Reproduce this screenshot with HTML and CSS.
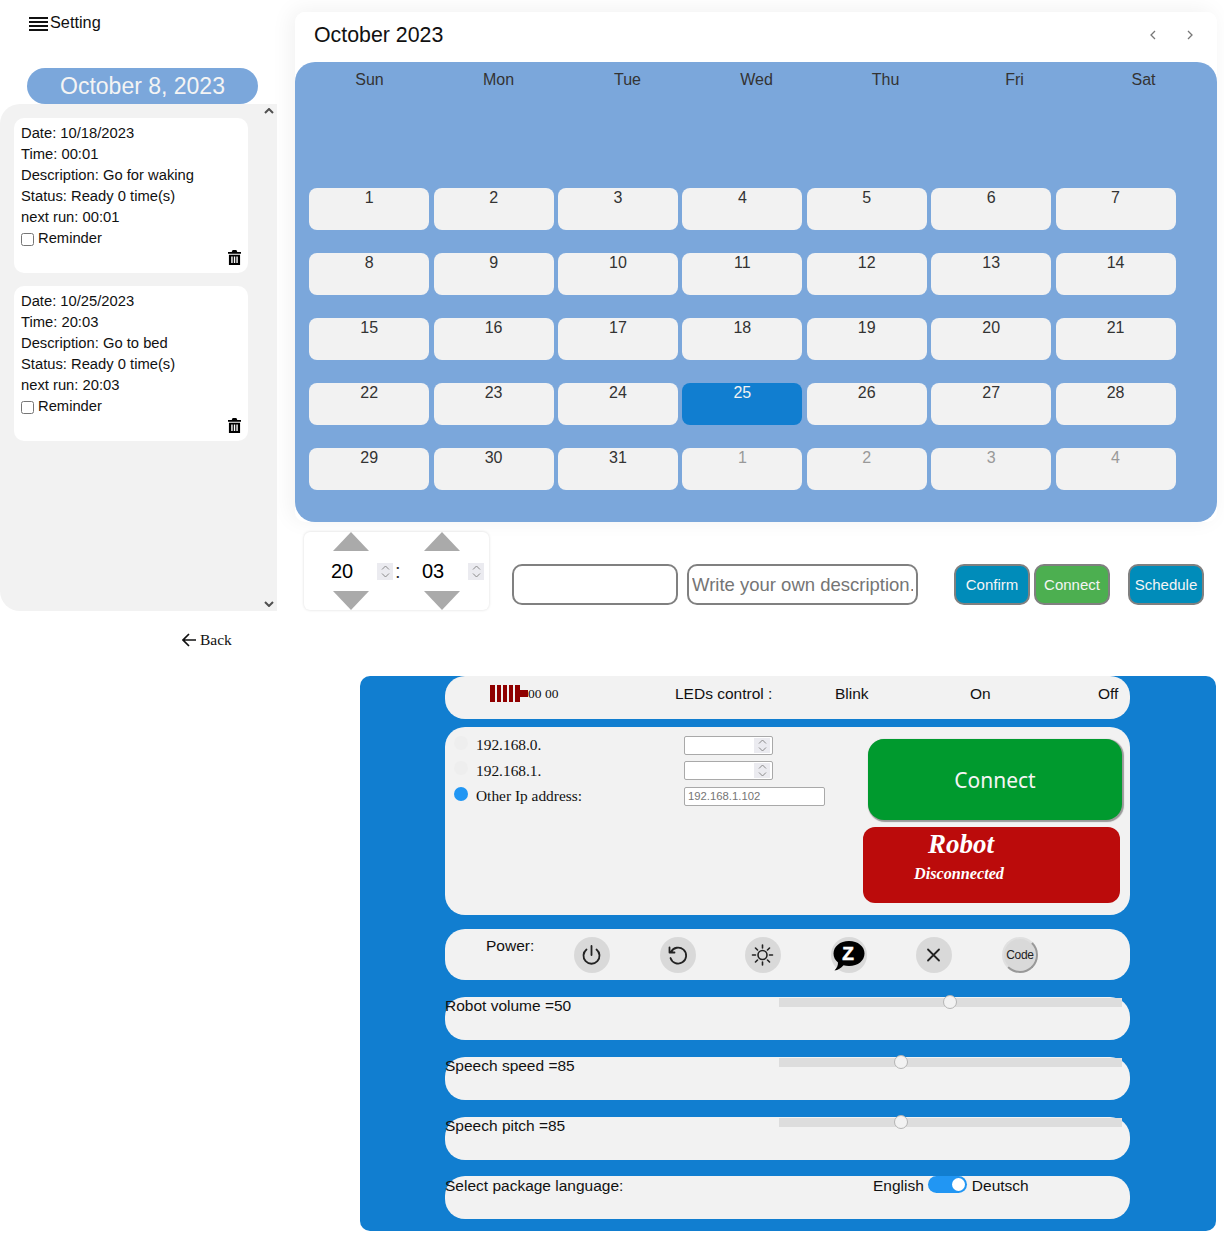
FILE: index.html
```html
<!DOCTYPE html>
<html lang="en">
<head>
<meta charset="utf-8">
<title>Robot schedule</title>
<link rel="stylesheet" href="styles.css">
</head>
<body>
<div class="top">
  <aside class="aside">
    <div class="setting">
      <svg class="burger" viewBox="0 0 19 14" width="19" height="14"><path d="M0 1h19M0 5h19M0 9h19M0 13h19" stroke="#111" stroke-width="1.8"/></svg>
      <span>Setting</span>
    </div>
    <div class="pill">October 8, 2023</div>
    <div class="list">
      <svg class="scroll-arrow up" viewBox="0 0 10 6" width="10" height="6"><path d="M1 5l4-4 4 4" fill="none" stroke="#505050" stroke-width="2"/></svg>
      <svg class="scroll-arrow down" viewBox="0 0 10 6" width="10" height="6"><path d="M1 1l4 4 4-4" fill="none" stroke="#505050" stroke-width="2"/></svg>
      <article class="card">
        <div>Date: 10/18/2023</div>
        <div>Time: 00:01</div>
        <div>Description: Go for waking</div>
        <div>Status: Ready 0 time(s)</div>
        <div>next run: 00:01</div>
        <label class="reminder"><input type="checkbox"> Reminder</label>
        <svg class="trash" viewBox="0 0 14 16" width="13" height="15"><path d="M5 0h4l1 2h4v2H0V2h4zM1 5h12v11H1zM3.500 7v7h1.500V7zM6.300 7v7h1.500V7zM9 7v7h1.500V7z" fill-rule="evenodd" fill="#000"/></svg>
      </article>
      <article class="card">
        <div>Date: 10/25/2023</div>
        <div>Time: 20:03</div>
        <div>Description: Go to bed</div>
        <div>Status: Ready 0 time(s)</div>
        <div>next run: 20:03</div>
        <label class="reminder"><input type="checkbox"> Reminder</label>
        <svg class="trash" viewBox="0 0 14 16" width="13" height="15"><path d="M5 0h4l1 2h4v2H0V2h4zM1 5h12v11H1zM3.500 7v7h1.500V7zM6.300 7v7h1.500V7zM9 7v7h1.500V7z" fill-rule="evenodd" fill="#000"/></svg>
      </article>
    </div>
    <div class="back">
      <svg viewBox="0 0 14 14" width="14" height="14"><path d="M7 1L1 7l6 6M1 7h13" fill="none" stroke="#111" stroke-width="1.700"/></svg>
      <span>Back</span>
    </div>
  </aside>
  <main class="main">
    <section class="calendar">
      <header class="cal-head">
        <h1>October 2023</h1>
        <div class="cal-nav">
          <svg viewBox="0 0 6 10" width="6" height="10"><path d="M5 1L1 5l4 4" fill="none" stroke="#777" stroke-width="1.300"/></svg>
          <svg viewBox="0 0 6 10" width="6" height="10"><path d="M1 1l4 4-4 4" fill="none" stroke="#777" stroke-width="1.300"/></svg>
        </div>
      </header>
      <div class="cal-body">
        <div class="weekdays"><span>Sun</span><span>Mon</span><span>Tue</span><span>Wed</span><span>Thu</span><span>Fri</span><span>Sat</span></div>
        <div class="days">
          <div class="day">1</div><div class="day">2</div><div class="day">3</div><div class="day">4</div><div class="day">5</div><div class="day">6</div><div class="day">7</div>
          <div class="day">8</div><div class="day">9</div><div class="day">10</div><div class="day">11</div><div class="day">12</div><div class="day">13</div><div class="day">14</div>
          <div class="day">15</div><div class="day">16</div><div class="day">17</div><div class="day">18</div><div class="day">19</div><div class="day">20</div><div class="day">21</div>
          <div class="day">22</div><div class="day">23</div><div class="day">24</div><div class="day selected">25</div><div class="day">26</div><div class="day">27</div><div class="day">28</div>
          <div class="day">29</div><div class="day">30</div><div class="day">31</div><div class="day muted">1</div><div class="day muted">2</div><div class="day muted">3</div><div class="day muted">4</div>
        </div>
      </div>
    </section>
    <div class="controls">
      <div class="picker">
        <div class="unit">
          <span class="tri up"></span>
          <div class="num-row">
            <input class="num" type="text" value="20">
            <span class="spin"><svg viewBox="0 0 9 13" width="9" height="13"><path d="M1 4.500L4.500 1 8 4.500M1 8.500L4.500 12 8 8.500" fill="none" stroke="#8a8a8a" stroke-width="1"/></svg></span>
          </div>
          <span class="tri down"></span>
        </div>
        <span class="colon">:</span>
        <div class="unit">
          <span class="tri up"></span>
          <div class="num-row">
            <input class="num" type="text" value="03">
            <span class="spin"><svg viewBox="0 0 9 13" width="9" height="13"><path d="M1 4.500L4.500 1 8 4.500M1 8.500L4.500 12 8 8.500" fill="none" stroke="#8a8a8a" stroke-width="1"/></svg></span>
          </div>
          <span class="tri down"></span>
        </div>
      </div>
      <input class="field short" type="text">
      <input class="field desc" type="text" placeholder="Write your own description.">
      <button class="btn blue first">Confirm</button>
      <button class="btn green">Connect</button>
      <button class="btn blue last">Schedule</button>
    </div>
  </main>
</div>

<section class="robot">
  <div class="row row-led">
    <div class="battery">
      <svg viewBox="0 0 38 17" width="38" height="17"><path d="M0 0h5v17H0zM7 0h4v17H7zM13 0h4v17h-4zM19 0h4v17h-4zM25 0h5v17h-5zM30 5h8v7h-8z" fill="#8f0000"/></svg>
      <span>00 00</span>
    </div>
    <span class="led-title">LEDs control :</span>
    <span class="led-blink">Blink</span>
    <span class="led-on">On</span>
    <span class="led-off">Off</span>
  </div>
  <div class="row row-net">
    <div class="ips">
      <div class="ip"><span class="radio"></span><span class="ip-label">192.168.0.</span>
        <div class="octet"><input type="text"><span class="spin small"><svg viewBox="0 0 9 13" width="9" height="13"><path d="M1 4.500L4.500 1 8 4.500M1 8.500L4.500 12 8 8.500" fill="none" stroke="#8a8a8a" stroke-width="1"/></svg></span></div>
      </div>
      <div class="ip"><span class="radio"></span><span class="ip-label">192.168.1.</span>
        <div class="octet"><input type="text"><span class="spin small"><svg viewBox="0 0 9 13" width="9" height="13"><path d="M1 4.500L4.500 1 8 4.500M1 8.500L4.500 12 8 8.500" fill="none" stroke="#8a8a8a" stroke-width="1"/></svg></span></div>
      </div>
      <div class="ip"><span class="radio on"></span><span class="ip-label">Other Ip address:</span><input class="other" type="text" placeholder="192.168.1.102"></div>
    </div>
    <div class="status">
      <button class="big-connect">Connect</button>
      <div class="robot-state">
        <div class="state-title">Robot</div>
        <div class="state-sub">Disconnected</div>
      </div>
    </div>
  </div>
  <div class="row row-power">
    <span class="power-label">Power:</span>
    <div class="power-icons">
      <span class="round"><svg viewBox="0 0 24 24" width="24" height="24"><path d="M11.500 3v9M6.500 6.500a8 8 0 1 0 10 0" fill="none" stroke="#222" stroke-width="1.800" stroke-linecap="round"/></svg></span>
      <span class="round"><svg viewBox="0 0 24 24" width="24" height="24"><path d="M5 9a8 8 0 1 1-.5 6M3.500 4.500v5h5" fill="none" stroke="#222" stroke-width="1.800" stroke-linecap="round" stroke-linejoin="round"/></svg></span>
      <span class="round"><svg viewBox="0 0 24 24" width="24" height="24"><circle cx="11.500" cy="12" r="4.500" fill="none" stroke="#222" stroke-width="1.600"/><path d="M11.500 2v3M11.500 19v3M1.500 12h3M18.500 12h3M4.500 5l2 2M16.500 17l2 2M4.500 19l2-2M16.500 7l2-2" stroke="#222" stroke-width="1.600" stroke-linecap="round"/></svg></span>
      <span class="round"><svg viewBox="0 0 34 34" width="34" height="34"><path d="M17 3c9 0 15.500 5.500 15.500 12.500S26 28 17 28c-2 0-3.800-.3-5.500-.8C9 30 6 32 2.500 32.500 5 30 6 27.500 6 24.500 3 22 1.500 19 1.500 15.500 1.500 8.500 8 3 17 3z" fill="#000"/><text x="16" y="22" class="zed">Z</text></svg></span>
      <span class="round"><svg viewBox="0 0 24 24" width="24" height="24"><path d="M6 6.500l11 11M17 6.500l-11 11" stroke="#222" stroke-width="1.800" stroke-linecap="round"/></svg></span>
      <span class="round code">Code</span>
    </div>
  </div>
  <div class="row row-slide">
    <span>Robot volume =50</span>
    <div class="track"><span class="thumb" style="left:49.850%"></span></div>
  </div>
  <div class="row row-slide">
    <span>Speech speed =85</span>
    <div class="track"><span class="thumb" style="left:35.700%"></span></div>
  </div>
  <div class="row row-slide">
    <span>Speech pitch =85</span>
    <div class="track"><span class="thumb" style="left:35.700%"></span></div>
  </div>
  <div class="row row-lang">
    <span class="lang-title">Select package language:</span>
    <span>English</span>
    <span class="toggle"><span class="knob"></span></span>
    <span>Deutsch</span>
  </div>
</section>
</body>
</html>
```
FILE: styles.css
```css
* { box-sizing: border-box; }
html, body { margin: 0; padding: 0; }
body {
  width: 1224px;
  height: 1235px;
  overflow: hidden;
  background: #fff;
  font-family: "Liberation Sans", Arial, sans-serif;
  font-size: 15.500px;
  color: #111;
}

.top { display: flex; gap: 18px; }

/* left column */
.aside { width: 277px; flex: none; }
.setting {
  display: flex;
  align-items: center;
  gap: 2px;
  height: 68px;
  padding: 0 0 24px 29px;
  font-size: 16.300px;
}
.burger { flex: none; margin-top: 4px; }
.pill {
  width: 231px;
  height: 36px;
  margin-left: 27px;
  border-radius: 18px;
  background: #7ba7db;
  color: #f4f4f4;
  font-size: 23px;
  line-height: 37px;
  text-align: center;
}
.list {
  position: relative;
  height: 507px;
  padding: 14px 0 0 14px;
  background: #f2f2f2;
  border-radius: 20px 0 0 20px;
}
.scroll-arrow { position: absolute; left: 264px; }
.scroll-arrow.up { top: 4px; }
.scroll-arrow.down { bottom: 4px; }
.card {
  position: relative;
  width: 234px;
  height: 155px;
  margin-bottom: 13px;
  padding: 5px 7px;
  background: #fff;
  border-radius: 10px;
  font-size: 14.750px;
  line-height: 21px;
}
.reminder { display: flex; align-items: center; gap: 4px; }
.reminder input { width: 13px; height: 13px; margin: 1px 0 0 0; }
.trash { position: absolute; right: 7px; bottom: 8px; }
.back {
  display: flex;
  align-items: center;
  gap: 4px;
  height: 49px;
  padding: 9px 0 0 182px;
  font-family: "Liberation Serif", serif;
  font-size: 15.500px;
}

/* calendar */
.main { width: 922px; flex: none; padding-top: 12px; }
.calendar { border-radius: 10px; box-shadow: -4px -2px 22px rgba(0, 0, 0, .06); }
.cal-head {
  display: flex;
  align-items: center;
  justify-content: space-between;
  height: 50px;
  padding: 0 24px 4px 19px;
  background: #fff;
  border-radius: 10px 10px 0 0;
}
.cal-head h1 { margin: 0; font-size: 21.350px; font-weight: 400; color: #111; }
.cal-nav { display: flex; gap: 31px; }
.cal-body {
  height: 460px;
  padding: 8px 9px 0 9px;
  background: #7ba7db;
  border-radius: 20px;
  color: #333;
  font-size: 16px;
}
.weekdays {
  display: grid;
  grid-template-columns: repeat(7, 129px);
  height: 118px;
  margin-left: 1px;
  text-align: center;
  line-height: 20px;
}
.days {
  display: grid;
  grid-template-columns: repeat(7, 120px);
  grid-auto-rows: 42px;
  gap: 23px 4.400px;
  margin-left: 5.200px;
}
.day {
  background: #f2f2f2;
  border-radius: 8px;
  text-align: center;
  line-height: 20px;
}
.day.selected { background: #117ed0; color: #f2f2f2; }
.day.muted { color: #999; }

/* controls */
.controls { display: flex; align-items: flex-start; padding: 10px 0 0 9px; }
.picker {
  display: flex;
  width: 185px;
  height: 78px;
  margin-right: 23px;
  padding-left: 1px;
  background: #fff;
  border-radius: 6px;
  box-shadow: 0 0 3px rgba(0, 0, 0, .15);
}
.unit { display: flex; flex-direction: column; align-items: center; width: 91px; }
.tri { width: 0; height: 0; border-left: 18px solid transparent; border-right: 18px solid transparent; }
.tri.up { border-bottom: 19px solid #aaa; }
.tri.down { border-top: 19px solid #aaa; }
.num-row { display: flex; align-items: center; height: 40px; width: 100%; padding-left: 26px; }
.num {
  width: 46px;
  height: 22px;
  padding: 0;
  border: 0;
  outline: 0;
  background: transparent;
  font-family: inherit;
  font-size: 20px;
  color: #000;
}
.spin {
  display: flex;
  align-items: center;
  justify-content: center;
  flex: none;
  width: 16px;
  height: 17px;
  background: #ebebf0;
}
.spin.small { height: 15px; }
.colon { width: 0; margin: 0 1px 0 -1px; padding-top: 28px; font-size: 20px; color: #333; }

.field {
  height: 41px;
  margin-top: 32px;
  border: 2px solid #808080;
  border-radius: 10px;
  background: #fff;
  font-family: inherit;
  font-size: 18.500px;
}
.field.short { width: 166px; margin-right: 9px; }
.field.desc { width: 231px; padding: 0 3px; }
.field.desc::placeholder { color: #757575; }
.btn {
  width: 76px;
  height: 41px;
  margin-top: 32px;
  padding: 0;
  border: 2px solid #808080;
  border-radius: 10px;
  color: #f5f5f5;
  font-family: inherit;
  font-size: 15px;
}
.btn.blue { background: #008cba; }
.btn.green { background: #4caf50; }
.btn.first { margin-left: 36px; margin-right: 4px; }
.btn.last { margin-left: 18px; }

/* robot panel */
.robot {
  width: 856px;
  height: 555px;
  margin: 16px 0 0 360px;
  padding: 0 86px 0 85px;
  background: #117ed0;
  border-radius: 10px;
}
.row {
  background: #f2f2f2;
  border-radius: 20px;
}
.row-led {
  display: flex;
  height: 43px;
  align-items: flex-start;
  padding-top: 9px;
}
.row-led > span { flex: none; }
.battery {
  display: flex;
  align-items: center;
  flex: none;
  width: 185px;
  height: 17px;
  margin-left: 45px;
  font-family: "Liberation Serif", serif;
  font-size: 13.500px;
}
.battery svg { flex: none; }
.led-title { width: 160px; }
.led-blink { width: 135px; }
.led-on { width: 128px; }
.row-net { display: flex; height: 188px; margin-top: 8px; }
.ips { width: 418px; padding: 5px 0 0 9px; }
.ip { display: flex; align-items: center; height: 25.500px; font-family: "Liberation Serif", serif; font-size: 15.400px; }
.radio { width: 14px; height: 14px; margin-top: -4px; border-radius: 50%; background: #eee; flex: none; }
.radio.on { background: #2196f3; }
.ip-label { width: 208px; margin: 1px 0 0 8px; flex: none; }
.octet {
  display: flex;
  align-items: center;
  width: 89px;
  height: 19px;
  margin-top: 1px;
  padding-right: 2px;
  border: 1px solid #a9a9a9;
  border-radius: 2px;
  background: #fff;
}
.octet input { flex: 1; width: 0; height: 100%; padding: 0; border: 0; background: transparent; }
.other {
  width: 141px;
  height: 19px;
  margin-top: 1px;
  padding: 0 3px;
  border: 1px solid #a9a9a9;
  border-radius: 2px;
  background: #fff;
  font-family: "Liberation Sans", sans-serif;
  font-size: 11.300px;
}
.other::placeholder { color: #757575; }
.status { display: flex; flex-direction: column; padding-top: 12px; }
.big-connect {
  width: 254px;
  height: 81px;
  margin: 0 0 1px 5px;
  padding: 0;
  border: 0;
  border-radius: 16px;
  background: #009a2e;
  box-shadow: 1px 1px 1px 1px #999;
  color: #f5f5f5;
  font-family: "Noto Sans", sans-serif;
  font-size: 21px;
}
.robot-state {
  width: 257px;
  height: 76px;
  margin-top: 6px;
  padding-top: 2px;
  background: #bb0b0b;
  border-radius: 12px;
  color: #fff;
  font-family: "Liberation Serif", serif;
  font-style: italic;
  font-weight: 700;
}
.state-title { margin-left: 65px; font-size: 27px; line-height: 31px; }
.state-sub { margin: 6px 0 0 51px; font-size: 16.200px; line-height: 17px; }
.row-power { display: flex; height: 51px; margin-top: 14px; }
.power-label { width: 129px; padding: 8px 0 0 41px; flex: none; }
.power-icons { display: flex; gap: 49.600px; padding-top: 8px; }
.round {
  display: flex;
  align-items: center;
  justify-content: center;
  width: 36px;
  height: 36px;
  border-radius: 50%;
  background: #d9d9d9;
  flex: none;
}
.zed { fill: #fff; stroke: #fff; stroke-width: .6; font-family: "Liberation Sans", sans-serif; font-size: 19px; font-weight: 700; text-anchor: middle; }
.code { border: 2px solid; border-color: #e0e0e0 #999 #999 #e0e0e0; font-size: 12px; color: #222; letter-spacing: -.300px; }
.row-slide { display: flex; height: 43px; margin-top: 17px; padding-top: 1px; line-height: 18px; }
.row-slide > span { width: 334px; margin-top: -1px; flex: none; }
.track { position: relative; width: 343px; height: 9px; background: #ddd; }
.thumb {
  position: absolute;
  top: -3px;
  width: 14px;
  height: 14px;
  margin-left: -7px;
  border: 1.500px solid #b5b5b5;
  border-radius: 50%;
  background: #f2f2f2;
}
.row-lang {
  display: flex;
  align-items: flex-start;
  height: 43px;
  margin-top: 16px;
  line-height: 20px;
}
.lang-title { width: 428px; flex: none; }
.toggle {
  position: relative;
  width: 39px;
  height: 17px;
  margin: 0 5px 0 4px;
  border-radius: 9px;
  background: #2196f3;
}
.knob {
  position: absolute;
  right: 2px;
  top: 2px;
  width: 13px;
  height: 13px;
  border-radius: 50%;
  background: #fff;
}
```
